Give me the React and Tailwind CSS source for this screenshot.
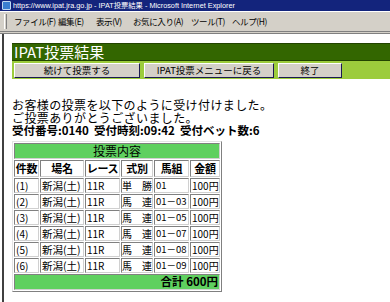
export default function App() {
  const jp = { fontFamily: '"Noto Sans CJK JP", "Noto Sans", sans-serif' };
  const rows = [
    ["(1)", "新潟(土)", "11R", "単　勝", "01", "100円"],
    ["(2)", "新潟(土)", "11R", "馬　連", "01－03", "100円"],
    ["(3)", "新潟(土)", "11R", "馬　連", "01－05", "100円"],
    ["(4)", "新潟(土)", "11R", "馬　連", "01－07", "100円"],
    ["(5)", "新潟(土)", "11R", "馬　連", "01－08", "100円"],
    ["(6)", "新潟(土)", "11R", "馬　連", "01－09", "100円"],
  ];
  const cell = "border border-t-[#808080] border-l-[#808080] border-b-[#d0d0d0] border-r-[#d0d0d0] overflow-hidden whitespace-nowrap flex items-center";
  const dataSize = ["text-[10px]", "text-[10.5px]", "text-[10px]", "text-[10px]", "text-[9.5px]", "text-[10px]"];
  return (
    <div className="w-[390px] h-[302px] overflow-hidden bg-white relative" style={jp}>
      {/* title bar */}
      <div className="h-[11px] bg-[#13247c] flex items-center pl-[2px] gap-[2px]">
        <div className="w-[9px] h-[9px] bg-[#3a7fd0] border border-[#c0d8f0] rounded-[1px] shrink-0" />
        <span className="text-white text-[7.3px] leading-[10px] whitespace-nowrap" style={{ fontFamily: '"Liberation Sans", "Noto Sans CJK JP", sans-serif' }}>
          https://www.ipat.jra.go.jp - IPAT投票結果 - Microsoft Internet Explorer
        </span>
      </div>
      {/* menu bar */}
      <div className="h-[21px] bg-[#d4d0c8] border-t border-white border-b border-b-[#808080] flex items-center">
        <div className="w-[3px] h-[15px] ml-[4px] mr-[7px] border-l border-white border-r border-r-[#808080] shrink-0" />
        <div className="flex text-[8.5px] tracking-[-0.4px] text-black whitespace-nowrap">
          <span className="w-[44px]">ファイル(F)</span>
          <span className="w-[38px]">編集(E)</span>
          <span className="w-[37px]">表示(V)</span>
          <span className="w-[58px]">お気に入り(A)</span>
          <span className="w-[41px]">ツール(T)</span>
          <span>ヘルプ(H)</span>
        </div>
      </div>
      <div className="h-[2px] bg-[#d4d0c8] border-b border-[#808080]" />
      {/* content */}
      <div className="ml-[2px] border-l-2 border-l-[#404040] h-full pl-[8px] pt-[9px]">
        <div className="h-[18px] bg-[#336600] border-t border-t-[#224400] border-b border-b-[#224400] flex items-center pl-[2px]">
          <span className="text-white text-[15px] leading-[16px] whitespace-nowrap">IPAT投票結果</span>
        </div>
        <div className="h-[18px] bg-[#9ccc3c] flex items-center gap-[4px] pl-[2px]">
          <div className="w-[126px] shrink-0 h-[15px] bg-[#d4d0c8] border border-t-white border-l-white border-b-[#1a1a50] border-r-[#1a1a50] flex items-center justify-center text-[9.5px] leading-[12px]">続けて投票する</div>
          <div className="w-[130px] shrink-0 h-[15px] bg-[#d4d0c8] border border-t-white border-l-white border-b-[#1a1a50] border-r-[#1a1a50] flex items-center justify-center text-[9.5px] leading-[12px]">IPAT投票メニューに戻る</div>
          <div className="w-[64px] shrink-0 h-[15px] bg-[#d4d0c8] border border-t-white border-l-white border-b-[#1a1a50] border-r-[#1a1a50] flex items-center justify-center text-[9.5px] leading-[12px]">終了</div>
        </div>
        <div className="mt-[19px] text-[12px] tracking-[0.4px] leading-[13px] text-black">
          <div className="h-[13px] whitespace-nowrap">お客様の投票を以下のように受け付けました。</div>
          <div className="h-[13px] whitespace-nowrap">ご投票ありがとうございました。</div>
          <div className="h-[13px] font-bold whitespace-nowrap text-[11.5px] tracking-normal">受付番号:0140&nbsp;&nbsp;受付時刻:09:42&nbsp;&nbsp;受付ベット数:6</div>
        </div>
        <div className="mt-[4px] w-[210px] border border-t-[#e4e4e4] border-l-[#e4e4e4] border-b-[#808080] border-r-[#808080] p-[1px] grid grid-cols-[25px_44px_35px_32px_35px_30px] gap-[1px] text-black">
          <div className={`${cell} col-span-6 h-[16px] bg-[#5fd05f] justify-center text-[12px]`}>投票内容</div>
          {["件数", "場名", "レース", "式別", "馬組", "金額"].map((h) => (
            <div key={h} className={`${cell} h-[17px] justify-center text-[11px] font-bold tracking-[-0.3px]`}>{h}</div>
          ))}
          {rows.map((r) =>
            r.map((c, i) => (
              <div key={r[0] + i} className={`${cell} h-[15px] ${i === 3 ? "pl-0" : "pl-[1px]"} ${dataSize[i]}`}>{c}</div>
            ))
          )}
          <div className={`${cell} col-span-6 h-[16px] bg-[#5fd05f] justify-end text-[11.5px] font-bold pr-[1px]`}>合計 600円</div>
        </div>
      </div>
    </div>
  );
}
